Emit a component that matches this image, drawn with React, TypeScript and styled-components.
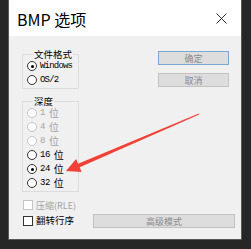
import styled, { createGlobalStyle } from 'styled-components';

const Global = createGlobalStyle`
  html, body {
    margin: 0;
    padding: 0;
    background: #262626;
    width: 251px;
    height: 249px;
    overflow: hidden;
  }
  body {
    font-family: "Noto Sans CJK SC", "Liberation Sans", sans-serif;
  }
`;

const Page = styled.div`
  position: relative;
  width: 251px;
  height: 249px;
`;

const Dialog = styled.div`
  margin-left: 8px;
  width: 234px;
  height: 240px;
  box-sizing: border-box;
  border: 1px solid #595959;
  border-top: none;
  display: flex;
  flex-direction: column;
`;

const TitleBar = styled.div`
  height: 36px;
  background: #ffffff;
  display: flex;
  align-items: center;
  justify-content: space-between;
  padding: 0 14px 0 8px;
`;

const Title = styled.span`
  font-size: 16px;
  color: #000;
  line-height: 1;
  margin-top: 1px;
`;

const Body = styled.div`
  flex: 1;
  background: #f0f0f0;
  padding: 11px 0 0 13px;
`;

const Top = styled.div`
  display: flex;
`;

const LeftCol = styled.div`
  width: 57px;
  flex-shrink: 0;
  display: flex;
  flex-direction: column;
`;

const RightCol = styled.div`
  margin-left: 79px;
  margin-top: 4px;
  display: flex;
  flex-direction: column;
  gap: 8px;
`;

const GroupBox = styled.div<{ $gap?: number }>`
  position: relative;
  margin-top: ${p => p.$gap ?? 7}px;
  border: 1px solid #dcdcdc;
  padding: 4px 0 1px 4px;
`;

const GroupLabel = styled.span`
  position: absolute;
  top: -7px;
  left: 10px;
  padding: 0 1px;
  background: #f0f0f0;
  font-size: 9.5px;
  line-height: 12px;
  white-space: nowrap;
  color: #000;
`;

const Row = styled.div<{ $disabled?: boolean }>`
  height: 14px;
  display: flex;
  align-items: center;
  gap: 3px;
  white-space: nowrap;
  color: ${p => (p.$disabled ? '#a3a3a3' : '#000')};
`;

const Radio = styled.span<{ $checked?: boolean; $disabled?: boolean }>`
  flex-shrink: 0;
  width: 10px;
  height: 10px;
  box-sizing: border-box;
  border-radius: 50%;
  border: 1px solid ${p => (p.$disabled ? '#c4c4c4' : '#333')};
  background: #fff;
  display: flex;
  align-items: center;
  justify-content: center;
  &::after {
    content: '';
    width: 3px;
    height: 3px;
    border-radius: 50%;
    background: ${p => (p.$checked ? '#000' : 'transparent')};
  }
`;

const Mono = styled.span`
  font-family: "Liberation Mono", monospace;
  font-size: 9px;
  letter-spacing: -0.8px;
`;

const Digits = styled(Mono)`
  letter-spacing: -0.5px;
  margin-right: 1px;
`;

const Cn = styled.span`
  font-size: 10px;
  line-height: 1;
`;

const Button = styled.div<{ $default?: boolean; $w: number }>`
  width: ${p => p.$w}px;
  height: 14px;
  flex-shrink: 0;
  box-sizing: border-box;
  background: #dddddd;
  border: 1px solid ${p => (p.$default ? '#7aa7d8' : '#c2c2c2')};
  display: flex;
  align-items: center;
  justify-content: center;
  font-size: 9px;
  color: #8a8a8a;
`;

const Bottom = styled.div`
  margin-top: 8px;
  padding-left: 1px;
  display: flex;
  flex-direction: column;
  gap: 4px;
`;

const CheckRow = styled.div<{ $disabled?: boolean }>`
  display: flex;
  align-items: center;
  gap: 3px;
  color: ${p => (p.$disabled ? '#a3a3a3' : '#000')};
`;

const Check = styled.span<{ $disabled?: boolean }>`
  flex-shrink: 0;
  width: 10px;
  height: 10px;
  box-sizing: border-box;
  border: 1px solid ${p => (p.$disabled ? '#c4c4c4' : '#333')};
  background: #fff;
`;

const CheckText = styled.span<{ $size: number }>`
  font-size: ${p => p.$size}px;
  line-height: 1;
  white-space: nowrap;
`;

const LastRow = styled.div`
  display: flex;
  align-items: center;
  justify-content: space-between;
  padding-right: 6px;
`;

const Overlay = styled.svg`
  position: absolute;
  left: 0;
  top: 0;
`;

const depths = [
  { v: '1', disabled: true },
  { v: '4', disabled: true },
  { v: '8', disabled: true },
  { v: '16' },
  { v: '24', checked: true },
  { v: '32' },
];

export default function App() {
  return (
    <Page>
      <Global />
      <Dialog>
        <TitleBar>
          <Title>BMP 选项</Title>
          <svg width="11" height="11" viewBox="0 0 11 11">
            <path d="M0.5 0.5 L10.5 10.5 M10.5 0.5 L0.5 10.5" stroke="#2b2b2b" strokeWidth="1" />
          </svg>
        </TitleBar>
        <Body>
          <Top>
            <LeftCol>
              <GroupBox>
                <GroupLabel>文件格式</GroupLabel>
                <Row>
                  <Radio $checked />
                  <Mono>Windows</Mono>
                </Row>
                <Row>
                  <Radio />
                  <Mono>OS/2</Mono>
                </Row>
              </GroupBox>
              <GroupBox $gap={12}>
                <GroupLabel>深度</GroupLabel>
                {depths.map(d => (
                  <Row key={d.v} $disabled={d.disabled}>
                    <Radio $checked={d.checked} $disabled={d.disabled} />
                    <Digits>{d.v}</Digits>
                    <Cn>位</Cn>
                  </Row>
                ))}
              </GroupBox>
            </LeftCol>
            <RightCol>
              <Button $default $w={71}>确定</Button>
              <Button $w={71}>取消</Button>
            </RightCol>
          </Top>
          <Bottom>
            <CheckRow $disabled>
              <Check $disabled />
              <CheckText $size={9}>压缩(RLE)</CheckText>
            </CheckRow>
            <LastRow>
              <CheckRow>
                <Check />
                <CheckText $size={9.5}>翻转行序</CheckText>
              </CheckRow>
              <Button $w={142}>高级模式</Button>
            </LastRow>
          </Bottom>
        </Body>
      </Dialog>
      <Overlay width="251" height="249" viewBox="0 0 251 249">
        <polygon
          points="198.8,113.5 78.1,163.7 76.1,159.1 66,171 81.6,171.9 79.7,167.3 199.2,114.5"
          fill="#ef4135"
        />
      </Overlay>
    </Page>
  );
}
